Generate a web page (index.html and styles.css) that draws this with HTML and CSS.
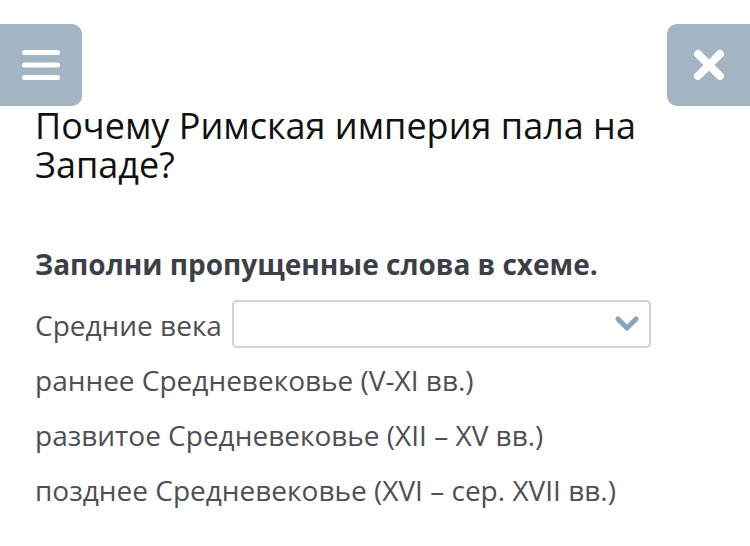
FILE: index.html
```html
<!DOCTYPE html>
<html>
<head>
    <title>Почему Римская империя пала на Западе?</title>
    <meta name="viewport" content="width=device-width, initial-scale=1">
    <link rel="stylesheet" href="styles.css">
</head>
<body>
    <div class="topbar">
        <button class="btn btn-menu" aria-label="Меню">
            <svg width="38" height="30" viewBox="0 0 38 30">
                <rect x="0" y="0" width="38" height="5" rx="2.5" fill="#fff"/>
                <rect x="0" y="12.5" width="38" height="5" rx="2.5" fill="#fff"/>
                <rect x="0" y="25" width="38" height="5" rx="2.5" fill="#fff"/>
            </svg>
        </button>
        <button class="btn btn-close" aria-label="Закрыть">
            <svg width="32" height="32" viewBox="0 0 32 32">
                <path d="M5 5 L27 27 M27 5 L5 27" stroke="#fff" stroke-width="8" stroke-linecap="round"/>
            </svg>
        </button>
    </div>

    <div class="content">
        <h1 class="question">Почему Римская империя пала на Западе?</h1>
        <p class="task">Заполни пропущенные слова в схеме.</p>

        <div class="row row-select">
            <span>Средние века</span>
            <div class="select">
                <svg width="24" height="16" viewBox="0 0 24 16">
                    <path d="M3 3 L12 12 L21 3" fill="none" stroke="#8aa4b5" stroke-width="5" stroke-linecap="round" stroke-linejoin="round"/>
                </svg>
            </div>
        </div>
        <div class="row">раннее Средневековье (V-XI вв.)</div>
        <div class="row">развитое Средневековье (XII – XV вв.)</div>
        <div class="row">позднее Средневековье (XVI – сер. XVII вв.)</div>
    </div>
</body>
</html>
```

FILE: styles.css
```css
body {
    margin: 0;
    font-family: "Open Sans", "Noto Sans", sans-serif;
    background-color: #fff;
}
.topbar {
    display: flex;
    justify-content: space-between;
    padding-top: 24px;
}
.btn {
    width: 92px;
    height: 82px;
    border: none;
    background: #a3b4c3;
    display: flex;
    align-items: center;
    justify-content: center;
    padding: 0;
    cursor: pointer;
}
.btn-menu {
    margin-left: -10px;
    padding-left: 10px;
    border-radius: 0 10px 10px 0;
}
.btn-close {
    width: 83px;
    border-radius: 10px 0 0 10px;
}
.content {
    padding: 0 35px;
}
.question {
    margin: 0;
    font-size: 36px;
    font-weight: 400;
    line-height: 39px;
    color: #111;
}
.task {
    margin: 61px 0 0;
    font-size: 28px;
    font-weight: 700;
    color: #3c3f47;
}
.row {
    font-size: 28px;
    color: #4d4f55;
    line-height: 55px;
}
.row-select {
    display: flex;
    align-items: center;
    gap: 10px;
    margin-top: 15px;
}
.select {
    width: 419px;
    height: 48px;
    margin-bottom: 3px;
    border: 2px solid #cbd4d8;
    border-radius: 5px;
    display: flex;
    align-items: center;
    justify-content: flex-end;
    padding-right: 10px;
    box-sizing: border-box;
}
```
